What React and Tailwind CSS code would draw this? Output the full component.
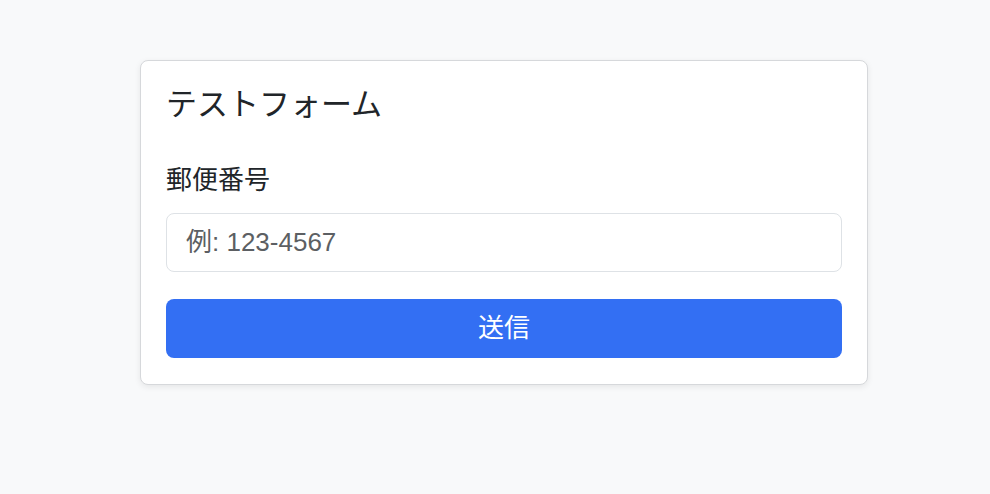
import React, { useState } from 'react';

export default function App() {
  const [zip, setZip] = useState('');

  const handleSubmit = (e) => {
    e.preventDefault();
  };

  return (
    <div
      className="min-h-screen bg-[#f8f9fa] pt-[60px]"
      style={{ fontFamily: '"Liberation Sans", "Noto Sans CJK JP", sans-serif' }}
    >
      {/* Card */}
      <div className="ml-[140px] w-[728px] bg-white border border-[#d6d8db] rounded-[8px] shadow-[0_2px_6px_rgba(0,0,0,0.08)] px-[25px] pt-[25px] pb-[26px]">
        <h2 className="text-[31px] leading-[37px] font-normal text-[#212529]">テストフォーム</h2>

        <form onSubmit={handleSubmit} className="mt-[38px]">
          <label htmlFor="zip" className="block text-[26px] leading-[39px] text-[#212529] mb-[13px]">
            郵便番号
          </label>
          <input
            id="zip"
            type="text"
            value={zip}
            onChange={(e) => setZip(e.target.value)}
            placeholder="例: 123-4567"
            className="block w-full h-[59px] px-[19px] text-[26px] text-[#212529] placeholder-[#5c5f63] bg-white border border-[#dee2e6] rounded-[8px] focus:outline-none"
          />
          <button
            type="submit"
            className="block mt-[27px] w-full h-[59px] bg-[#336ff3] text-white text-[26px] rounded-[8px]"
          >
            送信
          </button>
        </form>
      </div>
    </div>
  );
}
